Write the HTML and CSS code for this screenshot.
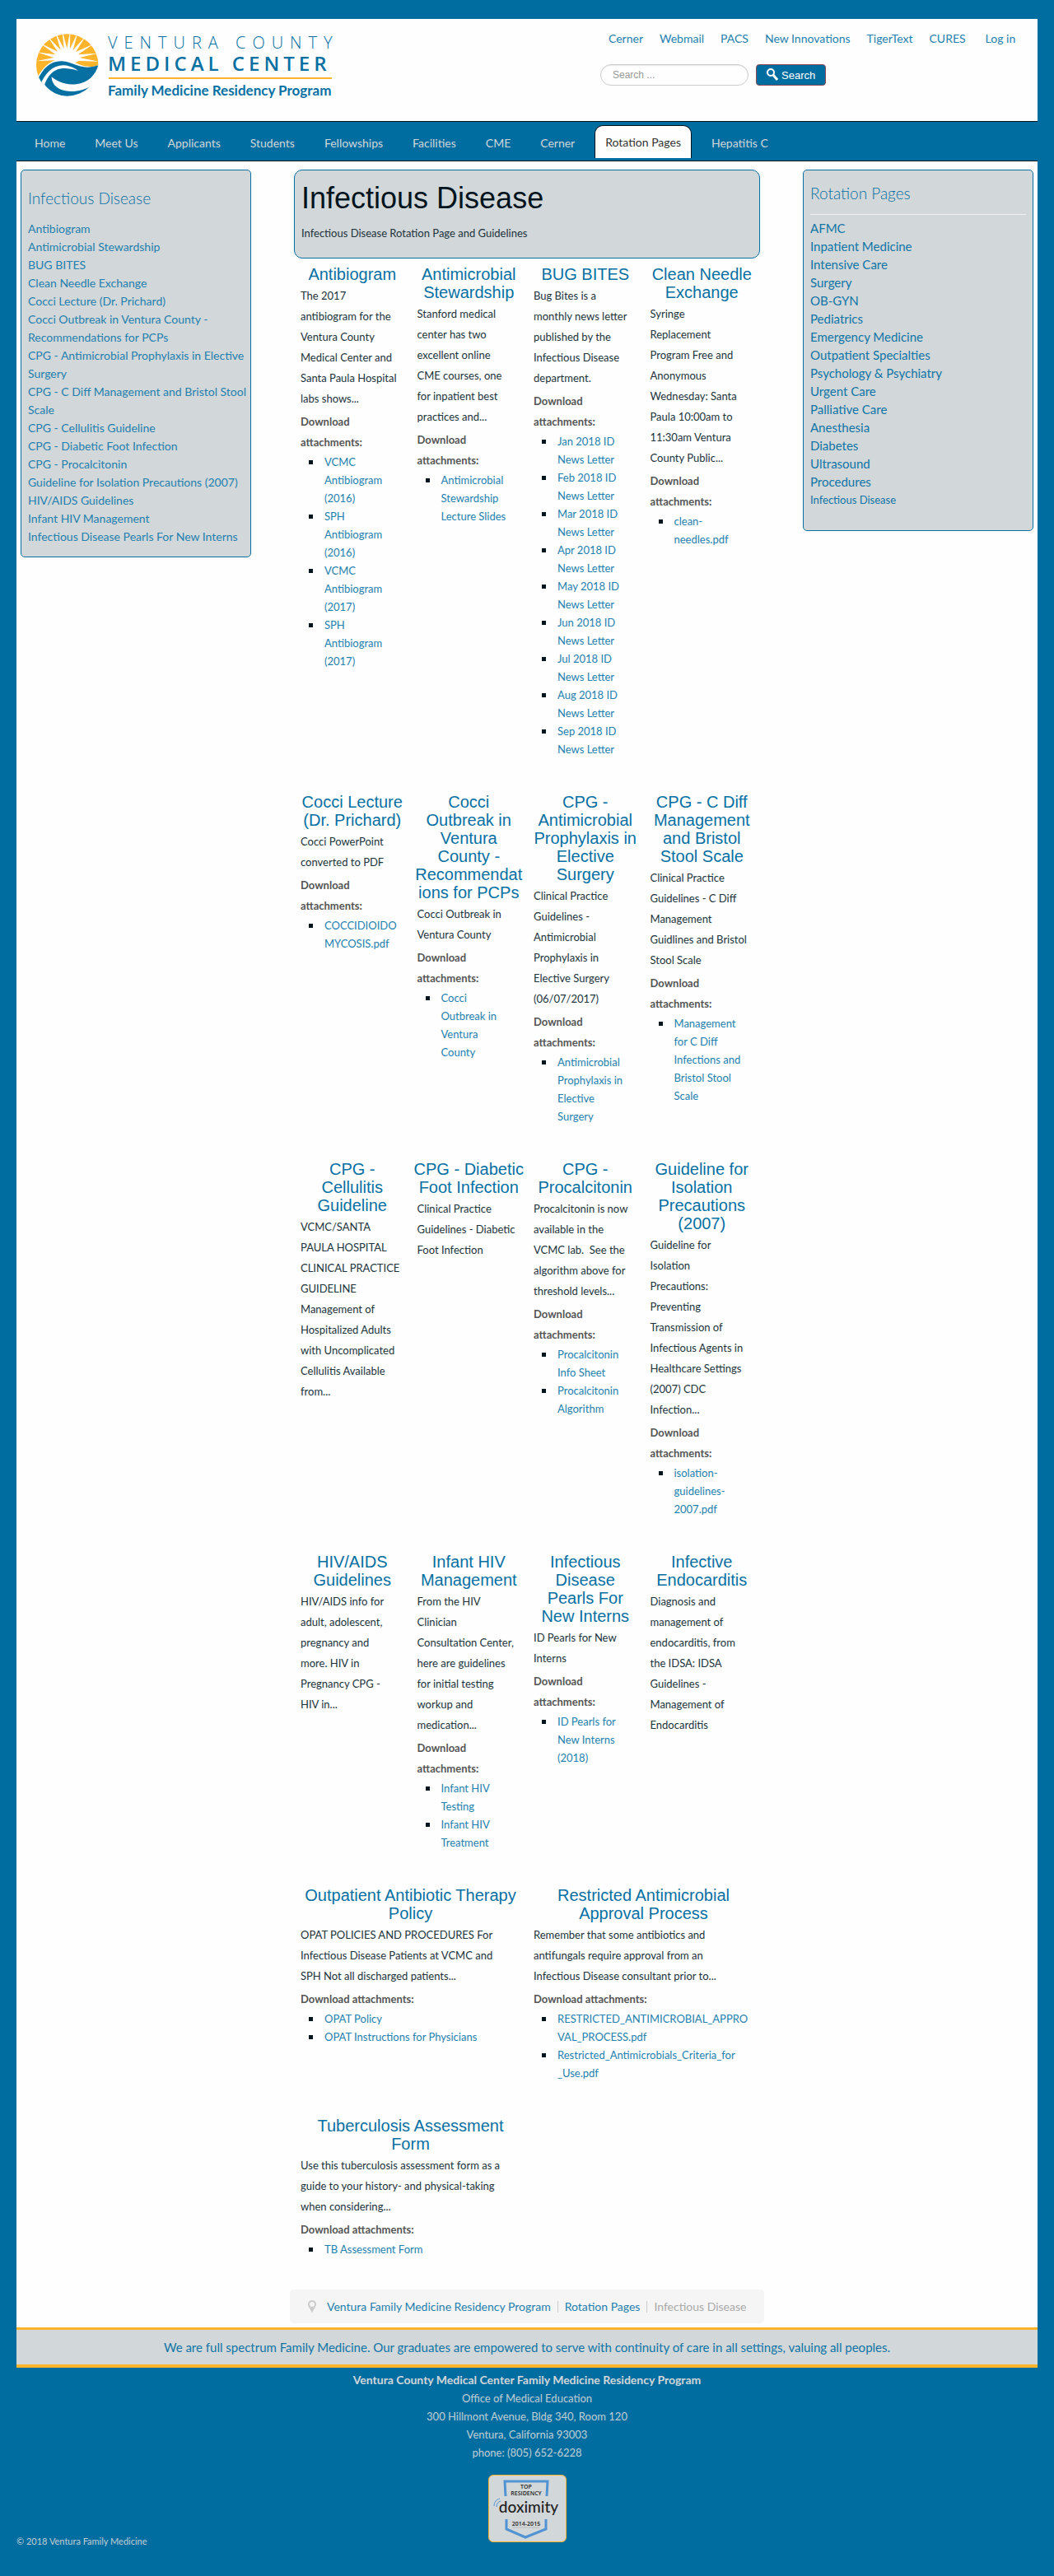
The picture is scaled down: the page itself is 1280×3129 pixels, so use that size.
FILE: index.html
```html
<!DOCTYPE html>
<html lang="en">
<head>
<meta charset="utf-8">
<meta name="viewport" content="width=device-width, initial-scale=1">
<title>Infectious Disease - Ventura Family Medicine</title>
<link rel="stylesheet" href="styles.css">
</head>
<body>
<header class="header">
  <a class="logo" href="#" aria-label="Ventura County Medical Center Family Medicine Residency Program">
    <svg width="374" height="92" viewBox="8 0 374 92">
      <defs><clipPath id="disc"><circle cx="137" cy="135" r="113"/></clipPath></defs>
      <g transform="scale(.3334)">
        <g clip-path="url(#disc)">
          <path fill="#fdb42a" d="M20 190V10H260V128C228 152 190 138 160 123C120 100 60 112 26 185Z"/>
          <path fill="#fff" d="M92 118L22 121L88 108L26 88L94 97L36 54L102 86L62 26L113 80L92 12L125 76L118 6L136 74L148 6L147 76L176 14L158 80L206 28L168 87L234 58L176 97L248 92L182 108L252 122L180 120L160 128L110 116Z"/>
          <path fill="#0670a3" d="M28 192C48 145 78 119 118 121C165 124 185 157 250 136C240 170 215 200 170 205C125 210 95 190 80 178C80 200 95 222 130 229C165 235 200 225 222 212C205 240 170 252 137 250C100 248 70 228 53 204L36 212Z"/>
          <path fill="#fff" d="M36 214C55 162 88 134 125 136C150 138 165 148 178 156C150 148 130 146 115 148C85 152 65 175 54 208L44 214Z"/>
        </g>
      </g>
      <g fill="#0670a3">
        <text class="logo-top" x="95" y="25">VENTURA COUNTY</text>
        <text class="logo-mid" x="95" y="52">MEDICAL CENTER</text>
        <text class="logo-low" x="95" y="82">Family Medicine Residency Program</text>
      </g>
      <rect x="96" y="60" width="271" height="2" fill="#fdb42a"/>
    </svg>
  </a>
  <div class="tools">
    <nav class="quick" aria-label="Quick links">
      <a href="#">Cerner</a><a href="#">Webmail</a><a href="#">PACS</a><a href="#">New Innovations</a><a href="#">TigerText</a><a href="#">CURES</a><a class="login" href="#">Log in</a>
    </nav>
    <form class="search">
      <input type="search" placeholder="Search ..." aria-label="Search">
      <button type="submit"><svg width="14" height="16" viewBox="0 0 14 16" aria-hidden="true"><circle cx="5" cy="5" r="4" fill="none" stroke="#fff" stroke-width="2"/><path d="M8 8L13 14" stroke="#fff" stroke-width="3"/></svg>Search</button>
    </form>
  </div>
</header>
<nav class="menu" aria-label="Main">
  <a href="#">Home</a><a href="#">Meet Us</a><a href="#">Applicants</a><a href="#">Students</a><a href="#">Fellowships</a><a href="#">Facilities</a><a href="#">CME</a><a href="#">Cerner</a><a class="current" href="#">Rotation Pages</a><a href="#">Hepatitis C</a>
</nav>
<div class="content">
  <aside class="side left">
    <h2>Infectious Disease</h2>
    <ul>
      <li><a href="#">Antibiogram</a></li>
      <li><a href="#">Antimicrobial Stewardship</a></li>
      <li><a href="#">BUG BITES</a></li>
      <li><a href="#">Clean Needle Exchange</a></li>
      <li><a href="#">Cocci Lecture (Dr. Prichard)</a></li>
      <li><a href="#">Cocci Outbreak in Ventura County -<br>Recommendations for PCPs</a></li>
      <li><a href="#">CPG - Antimicrobial Prophylaxis in Elective<br>Surgery</a></li>
      <li><a href="#">CPG - C Diff Management and Bristol Stool<br>Scale</a></li>
      <li><a href="#">CPG - Cellulitis Guideline</a></li>
      <li><a href="#">CPG - Diabetic Foot Infection</a></li>
      <li><a href="#">CPG - Procalcitonin</a></li>
      <li><a href="#">Guideline for Isolation Precautions (2007)</a></li>
      <li><a href="#">HIV/AIDS Guidelines</a></li>
      <li><a href="#">Infant HIV Management</a></li>
      <li><a href="#">Infectious Disease Pearls For New Interns</a></li>
    </ul>
  </aside>
  <main>
    <div class="intro">
      <h1>Infectious Disease</h1>
      <p>Infectious Disease Rotation Page and Guidelines</p>
    </div>
    <div class="row">
      <article>
        <h2><a href="#">Antibiogram</a></h2>
        <p>The 2017<br>antibiogram for the<br>Ventura County<br>Medical Center and<br>Santa Paula Hospital<br>labs shows...</p>
        <h3>Download<br>attachments:</h3>
        <ul>
          <li><a href="#">VCMC<br>Antibiogram<br>(2016)</a></li>
          <li><a href="#">SPH<br>Antibiogram<br>(2016)</a></li>
          <li><a href="#">VCMC<br>Antibiogram<br>(2017)</a></li>
          <li><a href="#">SPH<br>Antibiogram<br>(2017)</a></li>
        </ul>
      </article>
      <article>
        <h2><a href="#">Antimicrobial<br>Stewardship</a></h2>
        <p>Stanford medical<br>center has two<br>excellent online<br>CME courses, one<br>for inpatient best<br>practices and...</p>
        <h3>Download<br>attachments:</h3>
        <ul><li><a href="#">Antimicrobial<br>Stewardship<br>Lecture Slides</a></li></ul>
      </article>
      <article>
        <h2><a href="#">BUG BITES</a></h2>
        <p>Bug Bites is a<br>monthly news letter<br>published by the<br>Infectious Disease<br>department.</p>
        <h3>Download<br>attachments:</h3>
        <ul>
          <li><a href="#">Jan 2018 ID<br>News Letter</a></li>
          <li><a href="#">Feb 2018 ID<br>News Letter</a></li>
          <li><a href="#">Mar 2018 ID<br>News Letter</a></li>
          <li><a href="#">Apr 2018 ID<br>News Letter</a></li>
          <li><a href="#">May 2018 ID<br>News Letter</a></li>
          <li><a href="#">Jun 2018 ID<br>News Letter</a></li>
          <li><a href="#">Jul 2018 ID<br>News Letter</a></li>
          <li><a href="#">Aug 2018 ID<br>News Letter</a></li>
          <li><a href="#">Sep 2018 ID<br>News Letter</a></li>
        </ul>
      </article>
      <article>
        <h2><a href="#">Clean Needle<br>Exchange</a></h2>
        <p>Syringe<br>Replacement<br>Program Free and<br>Anonymous<br>Wednesday: Santa<br>Paula 10:00am to<br>11:30am Ventura<br>County Public...</p>
        <h3>Download<br>attachments:</h3>
        <ul><li><a href="#">clean-<br>needles.pdf</a></li></ul>
      </article>
    </div>
    <div class="row">
      <article>
        <h2><a href="#">Cocci Lecture<br>(Dr. Prichard)</a></h2>
        <p>Cocci PowerPoint<br>converted to PDF</p>
        <h3>Download<br>attachments:</h3>
        <ul><li><a href="#">COCCIDIOIDO<wbr>MYCOSIS.pdf</a></li></ul>
      </article>
      <article>
        <h2><a href="#">Cocci<br>Outbreak in<br>Ventura<br>County -<br>Recommendat<wbr>ions for PCPs</a></h2>
        <p>Cocci Outbreak in<br>Ventura County</p>
        <h3>Download<br>attachments:</h3>
        <ul><li><a href="#">Cocci<br>Outbreak in<br>Ventura<br>County</a></li></ul>
      </article>
      <article>
        <h2><a href="#">CPG -<br>Antimicrobial<br>Prophylaxis in<br>Elective<br>Surgery</a></h2>
        <p>Clinical Practice<br>Guidelines -<br>Antimicrobial<br>Prophylaxis in<br>Elective Surgery<br>(06/07/2017)</p>
        <h3>Download<br>attachments:</h3>
        <ul><li><a href="#">Antimicrobial<br>Prophylaxis in<br>Elective<br>Surgery</a></li></ul>
      </article>
      <article>
        <h2><a href="#">CPG - C Diff<br>Management<br>and Bristol<br>Stool Scale</a></h2>
        <p>Clinical Practice<br>Guidelines - C Diff<br>Management<br>Guidlines and Bristol<br>Stool Scale</p>
        <h3>Download<br>attachments:</h3>
        <ul><li><a href="#">Management<br>for C Diff<br>Infections and<br>Bristol Stool<br>Scale</a></li></ul>
      </article>
    </div>
    <div class="row">
      <article>
        <h2><a href="#">CPG -<br>Cellulitis<br>Guideline</a></h2>
        <p>VCMC/SANTA<br>PAULA HOSPITAL<br>CLINICAL PRACTICE<br>GUIDELINE<br>Management of<br>Hospitalized Adults<br>with Uncomplicated<br>Cellulitis Available<br>from...</p>
      </article>
      <article>
        <h2><a href="#">CPG - Diabetic<br>Foot Infection</a></h2>
        <p>Clinical Practice<br>Guidelines - Diabetic<br>Foot Infection</p>
      </article>
      <article>
        <h2><a href="#">CPG -<br>Procalcitonin</a></h2>
        <p>Procalcitonin is now<br>available in the<br>VCMC lab.&nbsp; See the<br>algorithm above for<br>threshold levels...</p>
        <h3>Download<br>attachments:</h3>
        <ul>
          <li><a href="#">Procalcitonin<br>Info Sheet</a></li>
          <li><a href="#">Procalcitonin<br>Algorithm</a></li>
        </ul>
      </article>
      <article>
        <h2><a href="#">Guideline for<br>Isolation<br>Precautions<br>(2007)</a></h2>
        <p>Guideline for<br>Isolation<br>Precautions:<br>Preventing<br>Transmission of<br>Infectious Agents in<br>Healthcare Settings<br>(2007) CDC<br>Infection...</p>
        <h3>Download<br>attachments:</h3>
        <ul><li><a href="#">isolation-<br>guidelines-<br>2007.pdf</a></li></ul>
      </article>
    </div>
    <div class="row">
      <article>
        <h2><a href="#">HIV/AIDS<br>Guidelines</a></h2>
        <p>HIV/AIDS info for<br>adult, adolescent,<br>pregnancy and<br>more. HIV in<br>Pregnancy CPG -<br>HIV in...</p>
      </article>
      <article>
        <h2><a href="#">Infant HIV<br>Management</a></h2>
        <p>From the HIV<br>Clinician<br>Consultation Center,<br>here are guidelines<br>for initial testing<br>workup and<br>medication...</p>
        <h3>Download<br>attachments:</h3>
        <ul>
          <li><a href="#">Infant HIV<br>Testing</a></li>
          <li><a href="#">Infant HIV<br>Treatment</a></li>
        </ul>
      </article>
      <article>
        <h2><a href="#">Infectious<br>Disease<br>Pearls For<br>New Interns</a></h2>
        <p>ID Pearls for New<br>Interns</p>
        <h3>Download<br>attachments:</h3>
        <ul><li><a href="#">ID Pearls for<br>New Interns<br>(2018)</a></li></ul>
      </article>
      <article>
        <h2><a href="#">Infective<br>Endocarditis</a></h2>
        <p>Diagnosis and<br>management of<br>endocarditis, from<br>the IDSA: IDSA<br>Guidelines -<br>Management of<br>Endocarditis</p>
      </article>
    </div>
    <div class="row wide">
      <article>
        <h2><a href="#">Outpatient Antibiotic Therapy<br>Policy</a></h2>
        <p>OPAT POLICIES AND PROCEDURES For<br>Infectious Disease Patients at VCMC and<br>SPH Not all discharged patients...</p>
        <h3>Download attachments:</h3>
        <ul>
          <li><a href="#">OPAT Policy</a></li>
          <li><a href="#">OPAT Instructions for Physicians</a></li>
        </ul>
      </article>
      <article>
        <h2><a href="#">Restricted Antimicrobial<br>Approval Process</a></h2>
        <p>Remember that some antibiotics and<br>antifungals require approval from an<br>Infectious Disease consultant prior to...</p>
        <h3>Download attachments:</h3>
        <ul>
          <li><a href="#">RESTRICTED_ANTIMICROBIAL_APPRO<wbr>VAL_PROCESS.pdf</a></li>
          <li><a href="#">Restricted_Antimicrobials_Criteria_for<wbr>_Use.pdf</a></li>
        </ul>
      </article>
    </div>
    <div class="row wide">
      <article>
        <h2><a href="#">Tuberculosis Assessment<br>Form</a></h2>
        <p>Use this tuberculosis assessment form as a<br>guide to your history- and physical-taking<br>when considering...</p>
        <h3>Download attachments:</h3>
        <ul><li><a href="#">TB Assessment Form</a></li></ul>
      </article>
    </div>
    <nav class="crumbs" aria-label="Breadcrumb">
      <svg width="10" height="16" viewBox="0 0 10 16" aria-hidden="true"><path fill="#ccc" fill-rule="evenodd" d="M5 0C2 0 0 2 0 5C0 8 4 12 5 16C6 12 10 8 10 5C10 2 8 0 5 0ZM5 2A3 3 0 0 1 5 8A3 3 0 0 1 5 2Z"/></svg>
      <a href="#">Ventura Family Medicine Residency Program</a><a href="#">Rotation Pages</a><span>Infectious Disease</span>
    </nav>
  </main>
  <aside class="side right">
    <h2>Rotation Pages</h2>
    <ul>
      <li><a href="#">AFMC</a></li>
      <li><a href="#">Inpatient Medicine</a></li>
      <li><a href="#">Intensive Care</a></li>
      <li><a href="#">Surgery</a></li>
      <li><a href="#">OB-GYN</a></li>
      <li><a href="#">Pediatrics</a></li>
      <li><a href="#">Emergency Medicine</a></li>
      <li><a href="#">Outpatient Specialties</a></li>
      <li><a href="#">Psychology &amp; Psychiatry</a></li>
      <li><a href="#">Urgent Care</a></li>
      <li><a href="#">Palliative Care</a></li>
      <li><a href="#">Anesthesia</a></li>
      <li><a href="#">Diabetes</a></li>
      <li><a href="#">Ultrasound</a></li>
      <li><a href="#">Procedures</a></li>
      <li class="small"><a href="#">Infectious Disease</a></li>
    </ul>
  </aside>
</div>
<p class="banner">We are full spectrum Family Medicine. Our graduates are empowered to serve with continuity of care in all settings, valuing all peoples.</p>
<footer class="footer">
  <address>
    <strong>Ventura County Medical Center Family Medicine Residency Program</strong><br>
    Office of Medical Education<br>
    300 Hillmont Avenue, Bldg 340, Room 120<br>
    Ventura, California 93003<br>
    phone: (805) 652-6228
  </address>
  <a class="badge" href="#" aria-label="Doximity top residency">
    <svg width="93" height="80" viewBox="0 0 93 80">
      <g fill="none" stroke="#5193d3">
        <path stroke-width="3" d="M20 25L19 7H71L70 25M21 53V65L44 75L69 65V53"/>
        <path stroke-width="1" d="M6 37C6 32 9 29 13 28M9 38C9 34 11 32 14 31"/>
      </g>
      <path stroke="#bbb" d="M28 63H61"/>
      <text class="badge-small" x="45" y="16">TOP</text>
      <text class="badge-small" x="45" y="24">RESIDENCY</text>
      <text class="badge-name" x="48" y="45">doximity</text>
      <text class="badge-small" x="45" y="61">2014-2015</text>
    </svg>
  </a>
  <p class="copy">© 2018 Ventura Family Medicine</p>
</footer>
</body>
</html>
```
FILE: styles.css
```css
* { box-sizing: border-box; }
body {
  margin: 0;
  padding: 23px 20px 0;
  background: #006da1;
  color: #21333b;
  font: 13px/22px Lato, "Open Sans", sans-serif;
}
h1, h2, h3, p, ul { margin: 0; padding: 0; font-weight: 400; }
a { color: #2480ae; text-decoration: none; }

.header {
  display: flex;
  justify-content: space-between;
  align-items: flex-start;
  min-height: 124px;
  padding: 11px 24px 0;
  background: #fefefe;
}
.logo svg { display: block; }
.logo-top { font: 300 20px "Open Sans", sans-serif; letter-spacing: 8px; }
.logo-mid { font: 600 24px "Open Sans", sans-serif; letter-spacing: 5px; }
.logo-low { font: 700 17px Lato, sans-serif; }
.tools { width: 507px; }
.quick { display: flex; gap: 20px; margin-top: 2px; padding-left: 10px; font-size: 14px; }
.quick .login { margin-left: 4px; }
.search { display: flex; gap: 9px; margin-top: 20px; }
.search input {
  width: 180px;
  height: 26px;
  padding: 0 14px;
  border: 1px solid #ccc;
  border-radius: 13px;
  background: #fefefe;
  box-shadow: inset 0 1px 1px #e8e8e8;
  font: 12px "Liberation Sans", sans-serif;
}
.search input::placeholder { color: #999; }
.search button {
  display: flex;
  align-items: center;
  gap: 4px;
  height: 26px;
  padding: 0 12px;
  border: 1px solid #8c4a56;
  border-radius: 4px;
  background: #006da1;
  color: #fff;
  font: 13px "Liberation Sans", sans-serif;
}
.menu {
  display: flex;
  min-height: 49px;
  border-top: 1px solid #00141e;
  border-bottom: 1px solid #00141e;
  padding: 4px 4px 3px;
  font-size: 14px;
}
.menu a { padding: 4px 18px 0; color: #d1d6d9; line-height: 36px; }
.menu .current {
  margin: 0 6px;
  padding: 0 12px;
  border: 1px solid #00141e;
  border-bottom: 0;
  border-radius: 10px 10px 0 0;
  background: #fefefe;
  color: #333;
  line-height: 39px;
}
.content {
  display: grid;
  grid-template-columns: 280px minmax(0, 566px) 280px;
  justify-content: space-between;
  align-items: start;
  padding: 10px 5px 5px;
  background: #fefefe;
}
.side { border: 1px solid #0670a3; border-radius: 5px; background: #d2d7d9; padding: 0 8px; }
.side h2 { color: #0670a3; font-size: 19px; font-weight: 300; }
.side ul { list-style: none; }
.left { padding-top: 23px; padding-bottom: 13px; }
.left h2 { margin-bottom: 15px; }
.left li { font-size: 14px; white-space: nowrap; }
.right { padding-top: 17px; padding-bottom: 26px; }
.right h2 { padding-bottom: 14px; margin-bottom: 5px; border-bottom: 1px solid #eee; }
.right li { font-size: 15px; }
.right li a { color: #0f75a6; }
.right .small { font-size: 13px; }

.intro { min-height: 108px; margin-bottom: 8px; padding: 12px 8px; border: 1px solid #0670a3; border-radius: 10px; background: #d2d7d9; }
.intro h1 { color: #00141e; font: 36px/44px "Liberation Sans", sans-serif; }
.intro p { margin-top: 9px; }
.row { display: grid; grid-template-columns: repeat(4, 1fr); margin-bottom: 42px; }
.row.wide { grid-template-columns: repeat(2, 1fr); }
.row article { padding: 0 8px; white-space: nowrap; min-width: 0; }
.row h2 { margin: 0 -5px; text-align: center; font: 20px/22px "Liberation Sans", sans-serif; white-space: normal; }
.row h2 a { color: #0670a3; }
.row p { margin-top: 3px; line-height: 25px; }
.row h3 { margin-top: 3px; color: #555; font-size: 13px; font-weight: 700; line-height: 25px; }
.row ul { padding-left: 10px; list-style: none; white-space: normal; }
.row li { display: flex; align-items: flex-start; gap: 14px; }
.row li::before { content: ""; flex: none; width: 5px; height: 5px; margin-top: 9px; background: #00141e; }
.row li a { min-width: 0; }

.crumbs {
  display: flex;
  align-items: center;
  min-height: 41px;
  margin: -4px -5px 0;
  padding: 0 12px 0 22px;
  border-radius: 5px;
  background: #f5f5f5;
  font-size: 14px;
  white-space: nowrap;
}
.crumbs svg { flex: none; margin-right: 13px; }
.crumbs a { border-right: 1px solid #ccc; line-height: 14px; margin-right: 8px; padding-right: 8px; }
.crumbs span { color: #aaa; }
.banner {
  border-top: 3px solid #fdb42a;
  border-bottom: 4px solid #fdb42a;
  background: #d2d7d9;
  color: #0f75a6;
  text-align: center;
  font-size: 15px;
  line-height: 42px;
}
.footer { padding: 4px 0 31px; color: #c0cdd4; text-align: center; }
.footer address { font-style: normal; }
.footer strong { color: #d1d6d9; font-size: 14px; line-height: 20px; }
.badge { display: block; width: 95px; height: 82px; margin: 16px auto 0; border: 1px solid #fdb42a; border-radius: 6px; background: #d2d7d9; }
.badge svg { display: block; }
.badge text { text-anchor: middle; fill: #222; }
.badge-small { font: 600 7px "Open Sans", sans-serif; }
.badge-name { font: 500 19px Lato, sans-serif; }
.copy { margin-top: -12px; font-size: 11px; text-align: left; }
```
